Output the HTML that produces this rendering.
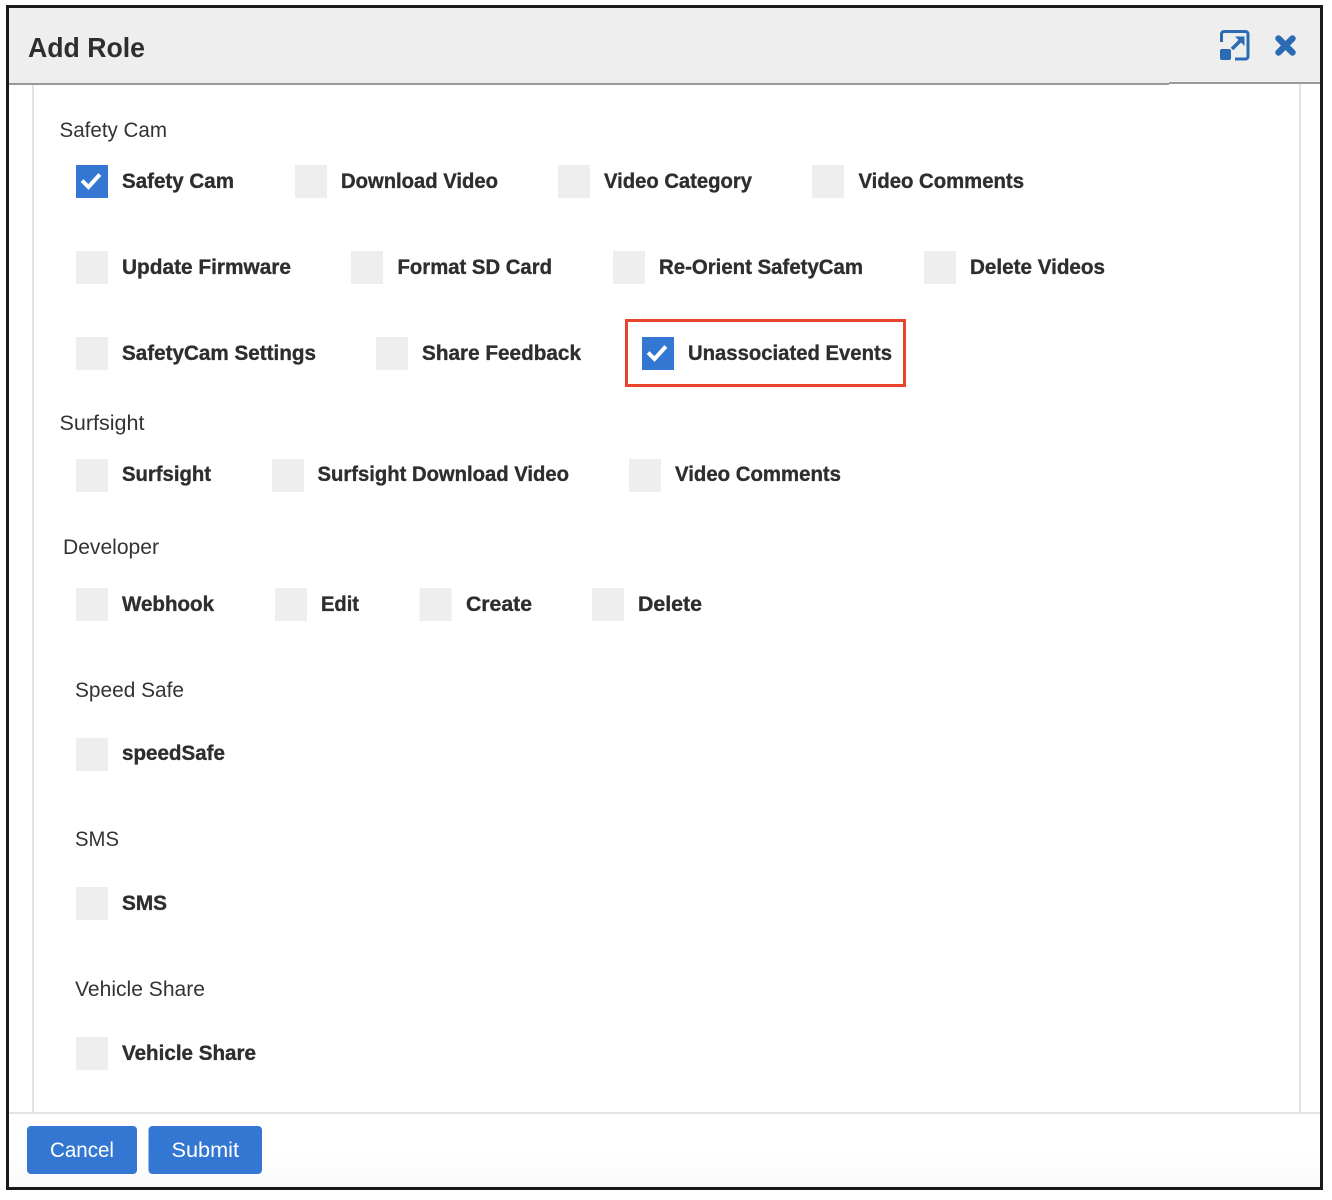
<!DOCTYPE html>
<html><head><meta charset="utf-8"><style>
html,body{margin:0;padding:0;background:#fff;width:1332px;height:1200px;overflow:hidden}
svg{display:block}
text{font-family:"Liberation Sans",sans-serif;fill:#2e2e2e}
.l{font-size:21px;fill:#333}
.b{font-size:21px;font-weight:700;stroke:#2e2e2e;stroke-width:.35}
.g{fill:#eeeeee}
.c{fill:#3477d2}
.k{fill:none;stroke:#fff;stroke-width:4;stroke-linecap:square}
</style></head><body>
<svg width="1332" height="1200" viewBox="0 0 1332 1200" xmlns="http://www.w3.org/2000/svg">
<defs><linearGradient id="f" x1="0" y1="0" x2="0" y2="1"><stop offset=".5" stop-color="#fff"/><stop offset="1" stop-color="#fafafa"/></linearGradient></defs>
<rect width="1332" height="1200" fill="#fff"/>
<rect x="8" y="7" width="1314" height="1181" fill="#fff"/>
<rect x="8" y="7" width="1314" height="76" fill="#eeeeee"/>
<rect x="8" y="83" width="1161" height="2" fill="#999"/>
<rect x="1169" y="82" width="152" height="2" fill="#999"/>
<rect x="32" y="85" width="2" height="1027" fill="#e2e2e2"/>
<rect x="1299" y="84" width="2" height="1028" fill="#e2e2e2"/>
<rect x="8" y="1114" width="1314" height="73" fill="url(#f)"/>
<rect x="8" y="1112" width="1314" height="2" fill="#e4e4e4"/>
<rect x="7.5" y="6.5" width="1314" height="1182" fill="none" stroke="#1a1a1a" stroke-width="3"/>

<text x="28" y="57" font-size="28" font-weight="700" textLength="117" lengthAdjust="spacingAndGlyphs">Add Role</text>

<!-- expand icon -->
<path d="M1221.500 42V34a2.500 2.500 0 0 1 2.500-2.500H1245.500a2.500 2.500 0 0 1 2.500 2.500V56.500a2.500 2.500 0 0 1-2.500 2.500H1235" fill="none" stroke="#2a6bb3" stroke-width="3"/>
<rect x="1220" y="49" width="11" height="11" rx="2" fill="#2a6bb3"/>
<path d="M1232 49L1241 40" stroke="#2a6bb3" stroke-width="3.600" fill="none"/>
<path d="M1235 36.500H1244.500V46Z" fill="#2a6bb3"/>
<!-- close icon -->
<path d="M1278.500 38.500L1292.500 52.500M1292.500 38.500L1278.500 52.500" stroke="#2a6bb3" stroke-width="6.500" stroke-linecap="round" fill="none"/>

<!-- Safety Cam -->
<text class="l" x="59.500" y="137" textLength="107.500" lengthAdjust="spacingAndGlyphs">Safety Cam</text>
<rect class="c" x="76" y="165" width="32" height="33"/>
<path class="k" d="M83.500 182L88.500 187L98.500 176"/>
<text class="b" x="122" y="188" textLength="112" lengthAdjust="spacingAndGlyphs">Safety Cam</text>
<rect class="g" x="295" y="165" width="32" height="33"/>
<text class="b" x="341" y="188" textLength="157" lengthAdjust="spacingAndGlyphs">Download Video</text>
<rect class="g" x="558" y="165" width="32" height="33"/>
<text class="b" x="604" y="188" textLength="148" lengthAdjust="spacingAndGlyphs">Video Category</text>
<rect class="g" x="812" y="165" width="32" height="33"/>
<text class="b" x="858.500" y="188" textLength="165.500" lengthAdjust="spacingAndGlyphs">Video Comments</text>

<rect class="g" x="76" y="251" width="32" height="33"/>
<text class="b" x="122" y="274" textLength="169" lengthAdjust="spacingAndGlyphs">Update Firmware</text>
<rect class="g" x="351" y="251" width="32" height="33"/>
<text class="b" x="397.500" y="274" textLength="154.500" lengthAdjust="spacingAndGlyphs">Format SD Card</text>
<rect class="g" x="613" y="251" width="32" height="33"/>
<text class="b" x="659" y="274" textLength="204" lengthAdjust="spacingAndGlyphs">Re-Orient SafetyCam</text>
<rect class="g" x="924" y="251" width="32" height="33"/>
<text class="b" x="970" y="274" textLength="135" lengthAdjust="spacingAndGlyphs">Delete Videos</text>

<rect class="g" x="76" y="337" width="32" height="33"/>
<text class="b" x="122" y="360" textLength="194" lengthAdjust="spacingAndGlyphs">SafetyCam Settings</text>
<rect class="g" x="376" y="337" width="32" height="33"/>
<text class="b" x="422" y="360" textLength="159" lengthAdjust="spacingAndGlyphs">Share Feedback</text>
<rect x="626.500" y="320.500" width="278" height="65" fill="none" stroke="#e8432b" stroke-width="3"/>
<rect class="c" x="642" y="337" width="32" height="33"/>
<path class="k" d="M649.500 354L654.500 359L664.500 348"/>
<text class="b" x="688" y="360" textLength="204" lengthAdjust="spacingAndGlyphs">Unassociated Events</text>

<!-- Surfsight -->
<text class="l" x="59.500" y="430" textLength="85" lengthAdjust="spacingAndGlyphs">Surfsight</text>
<rect class="g" x="76" y="459" width="32" height="33"/>
<text class="b" x="122" y="481" textLength="89" lengthAdjust="spacingAndGlyphs">Surfsight</text>
<rect class="g" x="272" y="459" width="32" height="33"/>
<text class="b" x="317.500" y="481" textLength="251.500" lengthAdjust="spacingAndGlyphs">Surfsight Download Video</text>
<rect class="g" x="629" y="459" width="32" height="33"/>
<text class="b" x="675" y="481" textLength="166" lengthAdjust="spacingAndGlyphs">Video Comments</text>

<!-- Developer -->
<text class="l" x="63" y="554" textLength="96" lengthAdjust="spacingAndGlyphs">Developer</text>
<rect class="g" x="76" y="588" width="32" height="33"/>
<text class="b" x="122" y="611" textLength="92" lengthAdjust="spacingAndGlyphs">Webhook</text>
<rect class="g" x="275" y="588" width="32" height="33"/>
<text class="b" x="321" y="611" textLength="38" lengthAdjust="spacingAndGlyphs">Edit</text>
<rect class="g" x="419.500" y="588" width="32" height="33"/>
<text class="b" x="466" y="611" textLength="66" lengthAdjust="spacingAndGlyphs">Create</text>
<rect class="g" x="592" y="588" width="32" height="33"/>
<text class="b" x="638" y="611" textLength="64" lengthAdjust="spacingAndGlyphs">Delete</text>

<!-- Speed Safe -->
<text class="l" x="75" y="697" textLength="109" lengthAdjust="spacingAndGlyphs">Speed Safe</text>
<rect class="g" x="76" y="738" width="32" height="33"/>
<text class="b" x="122" y="760" textLength="103" lengthAdjust="spacingAndGlyphs">speedSafe</text>

<!-- SMS -->
<text class="l" x="75" y="846" textLength="44" lengthAdjust="spacingAndGlyphs">SMS</text>
<rect class="g" x="76" y="887" width="32" height="33"/>
<text class="b" x="122" y="910" textLength="45" lengthAdjust="spacingAndGlyphs">SMS</text>

<!-- Vehicle Share -->
<text class="l" x="75" y="996" textLength="130" lengthAdjust="spacingAndGlyphs">Vehicle Share</text>
<rect class="g" x="76" y="1037" width="32" height="33"/>
<text class="b" x="122" y="1060" textLength="134" lengthAdjust="spacingAndGlyphs">Vehicle Share</text>

<!-- Buttons -->
<rect x="27" y="1126" width="110" height="48" rx="4" fill="#3477d2"/>
<text x="50" y="1157" font-size="21" textLength="64" lengthAdjust="spacingAndGlyphs" style="fill:#fff">Cancel</text>
<rect x="148.500" y="1126" width="113.500" height="48" rx="4" fill="#3477d2"/>
<text x="171.500" y="1157" font-size="21" textLength="67.500" lengthAdjust="spacingAndGlyphs" style="fill:#fff">Submit</text>
</svg>
</body></html>
